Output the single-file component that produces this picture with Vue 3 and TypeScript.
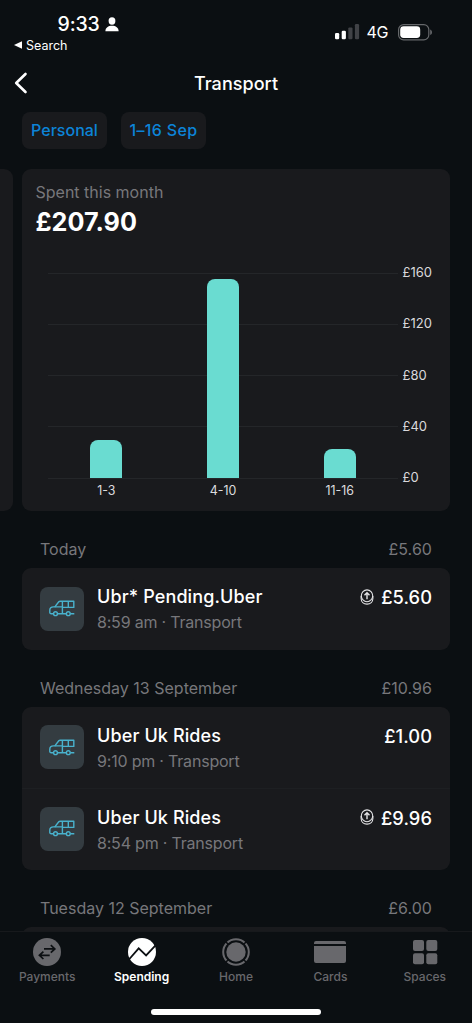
<script setup lang="ts">
interface Bar { label: string; height: number }
interface Transaction { name: string; time: string; amount: string; roundUp: boolean }
interface Day { title: string; total: string; items: Transaction[] }

const bars: Bar[] = [
  { label: '1-3', height: 38.5 },
  { label: '4-10', height: 199 },
  { label: '11-16', height: 29 },
]
const ticks = ['£160', '£120', '£80', '£40', '£0']
const days: Day[] = [
  {
    title: 'Today',
    total: '£5.60',
    items: [{ name: 'Ubr* Pending.Uber', time: '8:59 am', amount: '£5.60', roundUp: true }],
  },
  {
    title: 'Wednesday 13 September',
    total: '£10.96',
    items: [
      { name: 'Uber Uk Rides', time: '9:10 pm', amount: '£1.00', roundUp: false },
      { name: 'Uber Uk Rides', time: '8:54 pm', amount: '£9.96', roundUp: true },
    ],
  },
  { title: 'Tuesday 12 September', total: '£6.00', items: [] },
]
const tabs = ['Payments', 'Spending', 'Home', 'Cards', 'Spaces']
const activeTab = 'Spending'
</script>

<template>
  <div class="screen">
    <header class="status">
      <div class="status-left">
        <div class="clock">
          <span>9:33</span>
          <svg width="14" height="15" viewBox="0 0 14 15" fill="#fff">
            <ellipse cx="7" cy="4" rx="3.4" ry="3.7" />
            <path d="M.4 14.2C.4 10.8 3.2 8.8 7 8.8s6.6 2 6.6 5.4z" />
          </svg>
        </div>
        <div class="back-app">
          <svg width="8" height="8" viewBox="0 0 8 8" fill="#fff"><path d="M0 4 8 .3v7.4z" /></svg>
          <span>Search</span>
        </div>
      </div>
      <div class="status-right">
        <svg width="25" height="16" viewBox="0 0 25 16">
          <rect x="0" y="9" width="4.2" height="6.2" rx="1.2" fill="#fff" />
          <rect x="6.7" y="6.7" width="4.2" height="8.5" rx="1.2" fill="#fff" />
          <rect x="13.3" y="3.4" width="4.2" height="11.8" rx="1.2" fill="#404246" />
          <rect x="19.9" y="0" width="4.2" height="15.2" rx="1.2" fill="#404246" />
        </svg>
        <span class="network">4G</span>
        <svg width="35" height="17" viewBox="0 0 35 17">
          <rect x=".6" y=".6" width="30.2" height="15.3" rx="5" fill="none" stroke="#66686b" stroke-width="1.2" />
          <rect x="2.2" y="2.3" width="20" height="11.6" rx="3.4" fill="#fff" />
          <path d="M32.2 5.4c2.4 1 2.4 4.6 0 5.6z" fill="#66686b" />
        </svg>
      </div>
    </header>

    <nav class="titlebar">
      <svg class="back" width="14" height="22" viewBox="0 0 14 22" fill="none" stroke="#fff" stroke-width="2.6" stroke-linecap="round" stroke-linejoin="round">
        <path d="M11.5 2 2.2 11l9.3 9" />
      </svg>
      <h1>Transport</h1>
    </nav>

    <div class="chips">
      <button class="chip chip-account">Personal</button>
      <button class="chip chip-range">1–16 Sep</button>
    </div>

    <div class="carousel">
      <div class="card previous"></div>
      <section class="card summary">
        <p class="caption">Spent this month</p>
        <p class="total">£207.90</p>
        <div class="chart">
          <div class="grid-row" v-for="tick in ticks" :key="tick">
            <i></i><span>{{ tick }}</span>
          </div>
          <div class="bars">
            <div class="bar-column" v-for="bar in bars" :key="bar.label">
              <div class="bar" :style="{ height: bar.height + 'px' }"></div>
              <span>{{ bar.label }}</span>
            </div>
          </div>
        </div>
      </section>
    </div>

    <main class="feed">
      <section v-for="day in days" :key="day.title">
        <div class="day-head"><span>{{ day.title }}</span><span class="day-total">{{ day.total }}</span></div>
        <div class="card list">
          <div class="row" v-for="item in day.items" :key="item.time">
            <div class="icon">
              <svg width="26" height="17" viewBox="0 0 26 17" fill="none" stroke="#49b2cd" stroke-width="1.4" stroke-linejoin="round">
                <path d="M4.4 13.7H2.1a1.3 1.3 0 0 1-1.3-1.3v-2.1c0-2 1.3-3.4 3.5-3.4h1.5l4-5.1q.5-.6 1.3-.6h13.7v6.2H13.4" />
                <path d="M5.8 6.9h7.8M13.4 1.2v12.5M19.3 1.2v6.2M8.6 13.7h8.6M21.4 13.7h3.9" />
                <circle cx="6.5" cy="13.7" r="1.9" /><circle cx="19.3" cy="13.7" r="1.9" />
              </svg>
            </div>
            <div class="details">
              <div class="name">{{ item.name }}</div>
              <div class="meta">{{ item.time }} · Transport</div>
            </div>
            <svg v-if="item.roundUp" class="coin" width="14" height="17" viewBox="0 0 14 17" fill="none" stroke="#e4e4e6" stroke-width="1.1">
              <ellipse cx="7" cy="6.8" rx="5.7" ry="5.9" />
              <path d="M1.1 7v2.3c0 3.5 2.5 5.8 5.9 5.8s5.9-2.3 5.9-5.8V7" />
              <path d="M7 10.3V4M4.5 6.3 7 3.8l2.5 2.5" stroke-width="1.4" />
            </svg>
            <div class="amount">{{ item.amount }}</div>
          </div>
        </div>
      </section>
    </main>

    <footer class="tabbar">
      <div class="tab" v-for="tab in tabs" :key="tab" :class="{ active: tab === activeTab }">
        <svg v-if="tab === 'Payments'" width="32" height="28" viewBox="0 0 32 28">
          <circle cx="16" cy="14" r="14" fill="currentColor" />
          <path d="M13 10.9h10M19.8 7.2l4 3.7-4 3.7M18.7 17.3H8.5M12.4 13.6l-4 3.7 4 3.7" fill="none" stroke="#0c0f12" stroke-width="1.7" />
        </svg>
        <svg v-else-if="tab === 'Spending'" width="32" height="28" viewBox="0 0 32 28">
          <circle cx="16" cy="14" r="14" fill="currentColor" />
          <path d="M2.5 22 12.7 10.4l7.4 7L30.5 6.4" fill="none" stroke="#0c0f12" stroke-width="1.8" />
        </svg>
        <svg v-else-if="tab === 'Home'" width="32" height="28" viewBox="0 0 32 28">
          <circle cx="16" cy="14" r="9.7" fill="currentColor" />
          <circle cx="16" cy="14" r="12.8" fill="none" stroke="currentColor" stroke-width="2" />
          <path d="m5.5 3.5 3 3M23.5 6.5l3-3M23.5 21.5l3 3M5.5 24.5l3-3" stroke="#0c0f12" stroke-width="1.5" />
        </svg>
        <svg v-else-if="tab === 'Cards'" width="32" height="28" viewBox="0 0 32 28" fill="currentColor">
          <path d="M0 6V5a2 2 0 0 1 2-2h28a2 2 0 0 1 2 2v1zM0 8h32v15a2 2 0 0 1-2 2H2a2 2 0 0 1-2-2z" />
        </svg>
        <svg v-else width="32" height="28" viewBox="0 0 32 28" fill="currentColor">
          <rect x="4" y="2" width="11" height="11" rx="2" /><rect x="17.3" y="2" width="11" height="11" rx="2" />
          <rect x="4" y="15.2" width="11" height="11" rx="2" /><rect x="17.3" y="15.2" width="11" height="11" rx="2" />
        </svg>
        <span>{{ tab }}</span>
      </div>
      <div class="home-indicator"></div>
    </footer>
  </div>
</template>

<style>
body { margin: 0; background: #0b0f12; }
</style>

<style scoped>
.screen {
  position: relative;
  width: 472px;
  height: 1023px;
  overflow: hidden;
  background: #0b0f12;
  color: #fff;
  font-family: Inter, "Liberation Sans", sans-serif;
}
.screen, .screen * { box-sizing: border-box; }
p, h1 { margin: 0; }
svg { display: block; flex: none; }
.status { height: 60px; display: flex; justify-content: space-between; padding: 13px 39.5px 0 14px; }
.clock { display: flex; align-items: center; gap: 5px; margin-left: 43.5px; height: 22px; font-size: 19.5px; font-weight: 500; letter-spacing: -.1px; }
.back-app { display: flex; align-items: center; gap: 4px; height: 20px; font-size: 12.5px; letter-spacing: 0; }
.status-right { display: flex; align-items: flex-start; padding-top: 11px; }
.network { width: 38px; padding-left: 7px; font-size: 16px; line-height: 17px; letter-spacing: -.3px; }
.titlebar { height: 52px; padding: 0 14px 6px; display: grid; grid-template-columns: 14px 1fr 14px; align-items: center; }
h1 { text-align: center; font-size: 18px; font-weight: 500; line-height: 24px; letter-spacing: .05px; padding-top: 2px; }
.chips { display: flex; gap: 14px; padding-left: 22px; height: 57px; align-items: flex-start; }
.chip { height: 37px; border: 0; padding: 0 0 1px; border-radius: 8px; background: #191a1d; color: #0c84d8; font: 500 16px Inter, sans-serif; white-space: nowrap; }
.chip-account { width: 85px; }
.chip-range { width: 85px; letter-spacing: .35px; }
.card { background: #191a1d; border-radius: 9px; }
.carousel { display: flex; gap: 9px; height: 342px; }
.previous { width: 13px; border-radius: 0 9px 9px 0; flex: none; }
.summary { width: 428px; padding: 12px 14px; }
.caption { color: #77777b; font-size: 16px; line-height: 23px; margin-left: -.5px; }
.total { font-size: 25.2px; line-height: 34px; height: 34px; font-weight: 700; padding-top: 1px; margin-left: -.5px; }
.chart { position: relative; margin: 9.5px 0 0 12px; }
.grid-row { display: flex; align-items: center; height: 51.25px; font-size: 13px; color: #d9d9dc; }
.grid-row i { width: 350px; height: 1px; background: #242629; margin-right: 4.5px; }
.grid-row span { margin-top: -2px; }
.bars { position: absolute; left: 0; top: 0; width: 350px; height: 251.5px; display: grid; grid-template-columns: repeat(3, 1fr); align-items: end; }
.bar-column { display: flex; flex-direction: column; align-items: center; font-size: 12.4px; line-height: 17px; color: #dcdcdf; }
.bar { width: 32px; border-radius: 8px 8px 0 0; background: #6adcd1; margin-bottom: 4px; }
.day-head { height: 57px; padding: 28px 18px 0 40px; display: flex; justify-content: space-between; color: #77777b; font-size: 16px; line-height: 21px; }
.day-total { margin-right: 22px; letter-spacing: .05px; }
.list { width: 428px; min-height: 60px; margin-left: 22px; }
.row { height: 81.6px; padding: 0 18px 0 17.5px; display: flex; }
.row + .row { border-top: 1px solid #1d1f22; }
.icon { width: 44px; height: 44px; margin: 18.6px 13.5px 0 0; border-radius: 8px; background: #343c41; display: grid; place-items: center; }
.row + .row .icon { margin-top: 17.8px; }
.row + .row .details, .row + .row .amount { padding-top: 16.4px; }
.row + .row .coin { margin-top: 20px; }
.details { flex: 1; padding-top: 17.4px; }
.name { font-size: 18px; font-weight: 500; line-height: 24px; letter-spacing: .12px; }
.meta { font-size: 16px; line-height: 27px; color: #77777b; letter-spacing: -.2px; }
.coin { margin: 20.5px 7px 0 0; }
.amount { padding-top: 17.4px; font-size: 18.3px; font-weight: 500; line-height: 24px; letter-spacing: .05px; }
.tabbar { position: absolute; left: 0; right: 0; bottom: 0; height: 92px; display: flex; background: #0b0f12; border-top: 1px solid #17191c; }
.tab { flex: 1; display: flex; flex-direction: column; align-items: center; padding-top: 6px; gap: 2px; font-size: 12px; font-weight: 500; line-height: 17px; color: #68686c; }
.tab.active { color: #fff; font-weight: 600; }
.home-indicator { position: absolute; left: 151px; bottom: 8.5px; width: 170px; height: 6px; border-radius: 3px; background: #fff; }
</style>
